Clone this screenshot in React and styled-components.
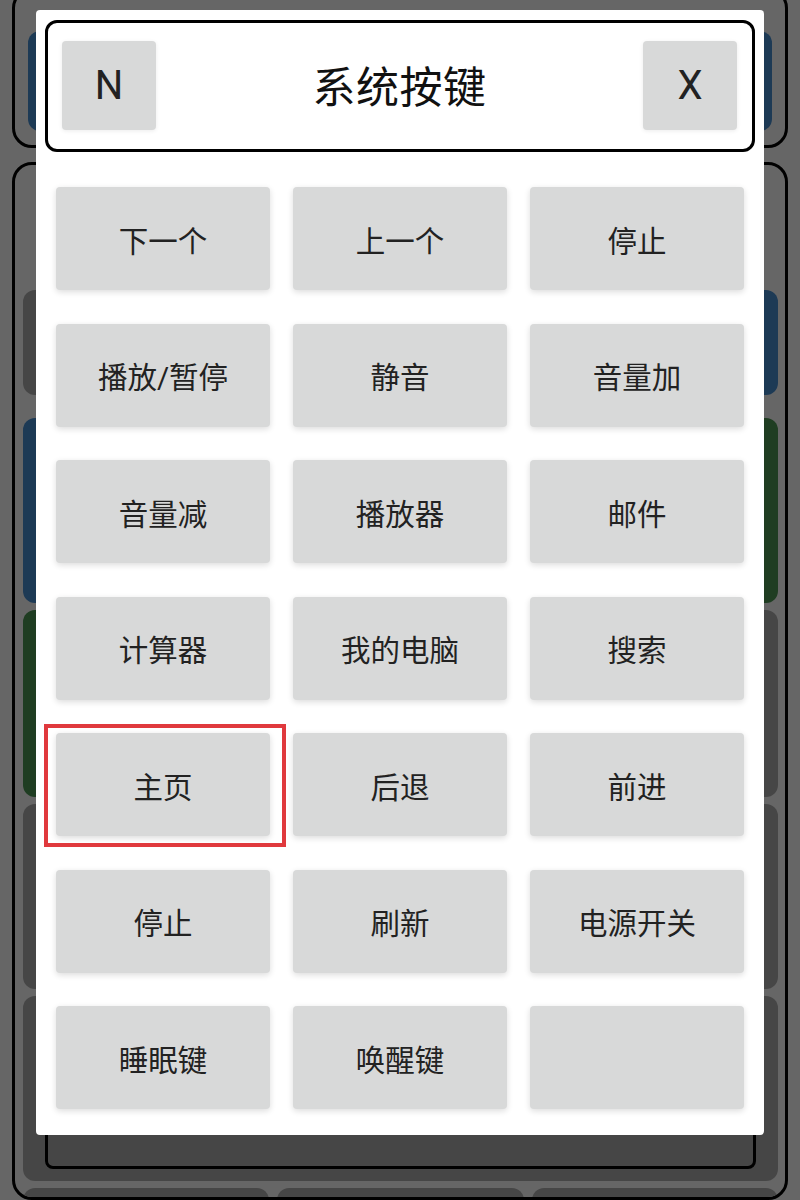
import styled, { createGlobalStyle } from "styled-components"

const GlobalStyle = createGlobalStyle`
  html, body {
    margin: 0;
    padding: 0;
    background: #ffffff;
    font-family: Roboto, "Noto Sans CJK SC", sans-serif;
    overflow: hidden;
  }
`

const tileColors = {
  gray: "#b0b0b0",
  blue: "#4a91d5",
  green: "#4e9956",
}

// keys shown in the dialog, row by row
const keys = [
  ["下一个", "上一个", "停止"],
  ["播放/暂停", "静音", "音量加"],
  ["音量减", "播放器", "邮件"],
  ["计算器", "我的电脑", "搜索"],
  ["主页", "后退", "前进"],
  ["停止", "刷新", "电源开关"],
  ["睡眠键", "唤醒键", ""],
]

const backRows = [
  { h: 105, tiles: ["gray", "gray", "blue"] },
  { h: 185, tiles: ["blue", "gray", "green"] },
  { h: 187, tiles: ["green", "gray", "gray"] },
  { h: 185, tiles: ["gray", "gray", "gray"] },
]

const App = () => {
  return (
    <>
      <GlobalStyle />
      <Page>
        <TopPanel>
          <TileRow $h={100}>
            <Tile $color="blue" />
            <Tile $color="blue" />
            <Tile $color="blue" />
          </TileRow>
        </TopPanel>
        <MainPanel>
          <PanelHead />
          <Rows>
            {backRows.map((row, i) => (
              <TileRow key={i} $h={row.h} $first={i === 0}>
                {row.tiles.map((c, j) => (
                  <Tile key={j} $color={c} />
                ))}
              </TileRow>
            ))}
            <WideTile>
              <InnerBox />
            </WideTile>
            <TileRow $h={100}>
              <Tile $color="gray" />
              <Tile $color="gray" />
              <Tile $color="gray" />
            </TileRow>
          </Rows>
        </MainPanel>
      </Page>

      <Overlay>
        <Dialog>
          <Header>
            <HeadButton>N</HeadButton>
            <Title>系统按键</Title>
            <HeadButton>X</HeadButton>
          </Header>
          <KeyGrid>
            {keys.flat().map((label, i) => (
              <KeyCell key={i}>
                <KeyButton>{label}</KeyButton>
                {label === "主页" && <Selected />}
              </KeyCell>
            ))}
          </KeyGrid>
        </Dialog>
      </Overlay>
    </>
  )
}

export default App

const Page = styled.div`
  height: 1200px;
  padding: 0 12px;
  box-sizing: border-box;
  display: flex;
  flex-direction: column;
  gap: 14px;
`

const TopPanel = styled.div`
  margin-top: -12px;
  height: 160px;
  box-sizing: border-box;
  border: 3px solid #000;
  border-radius: 20px;
  padding: 40px 13px 0 13px;
`

const MainPanel = styled.div`
  flex: 1;
  border: 3px solid #000;
  border-radius: 20px;
  padding: 0 7px 0 8px;
  overflow: hidden;
`

const PanelHead = styled.div`
  height: 125px;
`

const Rows = styled.div`
  display: flex;
  flex-direction: column;
  gap: 7px;
`

const TileRow = styled.div`
  display: grid;
  grid-template-columns: 1fr 1fr 1fr;
  gap: 8px;
  height: ${(p) => p.$h}px;
  flex-shrink: 0;
  margin-bottom: ${(p) => (p.$first ? 16 : 0)}px;
`

const Tile = styled.div`
  background: ${(p) => tileColors[p.$color]};
  border-radius: 12px;
`

const WideTile = styled.div`
  height: 185px;
  flex-shrink: 0;
  background: ${tileColors.gray};
  border-radius: 12px;
  padding: 0 22px 12px;
  box-sizing: border-box;
  display: flex;
  flex-direction: column;
  justify-content: flex-end;
`

const InnerBox = styled.div`
  height: 120px;
  border: 3px solid #000;
  border-radius: 8px;
`

const Overlay = styled.div`
  position: fixed;
  inset: 0;
  background: rgba(0, 0, 0, 0.6);
  display: flex;
  justify-content: center;
  align-items: flex-start;
  padding-top: 10px;
`

const Dialog = styled.div`
  width: 728px;
  height: 1125px;
  box-sizing: border-box;
  background: #ffffff;
  border-radius: 4px;
  padding: 10px 9px 0;
`

const Header = styled.div`
  height: 132px;
  box-sizing: border-box;
  border: 3px solid #000;
  border-radius: 12px;
  padding: 18px 15px 0 14px;
  display: flex;
  align-items: flex-start;
  justify-content: space-between;
`

const HeadButton = styled.div`
  width: 94px;
  height: 89px;
  background: #d8d9d9;
  border-radius: 4px;
  box-shadow: 0 1px 4px rgba(0, 0, 0, 0.08);
  display: flex;
  align-items: center;
  justify-content: center;
  font-size: 40px;
  color: #222;
`

const Title = styled.div`
  align-self: center;
  margin-top: -22px;
  font-size: 43px;
  color: #111;
  letter-spacing: 0.5px;
`

const KeyGrid = styled.div`
  margin: 35px 11px 0;
  display: grid;
  grid-template-columns: repeat(3, 214px);
  grid-auto-rows: 103px;
  column-gap: 23px;
  row-gap: 33.5px;
`

const KeyCell = styled.div`
  position: relative;
`

const KeyButton = styled.div`
  height: 100%;
  background: #d8d9d9;
  border-radius: 4px;
  box-shadow: 0 2px 6px rgba(0, 0, 0, 0.14);
  display: flex;
  align-items: center;
  justify-content: center;
  font-size: 29.5px;
  color: #222;
`

const Selected = styled.div`
  position: absolute;
  left: -12px;
  top: -9px;
  right: -16px;
  bottom: -11px;
  border: 4px solid #e0393d;
  pointer-events: none;
`
